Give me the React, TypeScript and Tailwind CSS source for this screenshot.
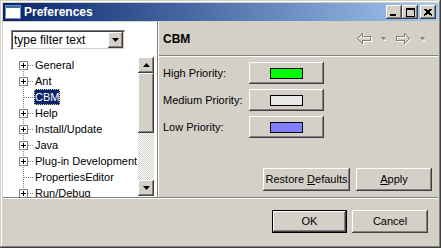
import React from "react";

const raised =
  "bg-[#d4d0c8] shadow-[inset_-1px_-1px_#404040,inset_1px_1px_#ffffff,inset_-2px_-2px_#808080,inset_2px_2px_#d4d0c8]";
const sunken =
  "shadow-[inset_1px_1px_#808080,inset_-1px_-1px_#ffffff,inset_2px_2px_#404040,inset_-2px_-2px_#d4d0c8]";

function TreeGutter({ expander, first }: { expander: boolean; first?: boolean }) {
  return (
    <svg width="23" height="16" className="shrink-0" shapeRendering="crispEdges">
      <line
        x1="12.5"
        y1={first ? 8 : 0}
        x2="12.5"
        y2="16"
        stroke="#808080"
        strokeWidth="1"
        strokeDasharray="1 1"
      />
      <line x1={expander ? 17 : 13} y1="8.5" x2="23" y2="8.5" stroke="#808080" strokeDasharray="1 1" />
      {expander && (
        <g>
          <rect x="8.5" y="4.5" width="8" height="8" fill="#fff" stroke="#808080" />
          <line x1="10" y1="8.5" x2="15" y2="8.5" stroke="#000" />
          <line x1="12.5" y1="6" x2="12.5" y2="11" stroke="#000" />
        </g>
      )}
    </svg>
  );
}

function TreeRow({
  label,
  expander = true,
  first,
  selected,
}: {
  label: string;
  expander?: boolean;
  first?: boolean;
  selected?: boolean;
}) {
  return (
    <div className="flex h-[16px] items-center whitespace-nowrap">
      <TreeGutter expander={expander} first={first} />
      {selected ? (
        <span className="h-[16px] bg-[#0a246a] px-[1px] leading-[16px] text-white outline outline-1 outline-dotted outline-[#d4d0a0] -outline-offset-1">
          {label}
        </span>
      ) : (
        <span className="px-[1px] leading-[16px]">{label}</span>
      )}
    </div>
  );
}

function ColorRow({ label, color }: { label: string; color: string }) {
  return (
    <div className="flex h-[22px] items-center">
      <span className="w-[86px]">{label}</span>
      <div className={`${raised} flex h-[22px] w-[75px] items-center justify-center`}>
        <div className="h-[11px] w-[33px] border border-black" style={{ background: color }} />
      </div>
    </div>
  );
}

function Btn({ children, w, isDefault }: { children: React.ReactNode; w: string; isDefault?: boolean }) {
  const cls = isDefault
    ? "bg-[#d4d0c8] shadow-[inset_0_0_0_1px_#000000,inset_-2px_-2px_#404040,inset_2px_2px_#ffffff,inset_-3px_-3px_#808080]"
    : raised;
  return <div className={`${cls} ${w} flex h-[23px] items-center justify-center`}>{children}</div>;
}

function NavArrow({ dir }: { dir: "left" | "right" }) {
  const pts =
    dir === "left"
      ? "0.5,5.5 5.5,0.5 5.5,3.5 13.5,3.5 13.5,7.5 5.5,7.5 5.5,10.5"
      : "13.5,5.5 8.5,0.5 8.5,3.5 0.5,3.5 0.5,7.5 8.5,7.5 8.5,10.5";
  return (
    <svg width="15" height="12" shapeRendering="crispEdges">
      <polygon points={pts} fill="none" stroke="#ffffff" transform="translate(1,1)" />
      <polygon points={pts} fill="none" stroke="#808080" />
    </svg>
  );
}

function SmallTri() {
  return (
    <svg width="6" height="4">
      <polygon points="0,0 5,0 2.5,3" fill="#808080" />
      <rect x="3" y="3" width="2" height="1" fill="#fff" />
    </svg>
  );
}

export default function App() {
  return (
    <div
      className="flex h-[248px] w-[441px] flex-col bg-[#d4d0c8] p-[3px] text-[11px] text-black shadow-[inset_-1px_-1px_#404040,inset_1px_1px_#d4d0c8,inset_-2px_-2px_#808080,inset_2px_2px_#ffffff]"
      style={{ fontFamily: '"Liberation Sans", Arial, sans-serif' }}
    >
      {/* Title bar */}
      <div className="flex h-[18px] shrink-0 items-center bg-gradient-to-r from-[#0a246a] to-[#a6caf0] pl-[2px] pr-[2px]">
        <svg width="16" height="14" className="shrink-0" shapeRendering="crispEdges">
          <rect x="0" y="0" width="16" height="14" fill="#ffffff" />
          <rect x="0" y="0" width="16" height="3" fill="#3a6ea5" />
          <rect x="0.5" y="0.5" width="15" height="13" fill="none" stroke="#6f8fc0" />
        </svg>
        <span className="ml-[3px] text-[12px] font-bold text-white">Preferences</span>
        <div className="ml-auto flex items-center">
          <div className={`${raised} flex h-[14px] w-[16px] items-end justify-center`}>
            <div className="mb-[3px] ml-[-2px] h-[2px] w-[6px] bg-black" />
          </div>
          <div className={`${raised} flex h-[14px] w-[16px] items-center justify-center`}>
            <div className="h-[9px] w-[9px] border border-t-2 border-black" />
          </div>
          <div className={`${raised} ml-[2px] flex h-[14px] w-[16px] items-center justify-center`}>
            <svg width="8" height="7" shapeRendering="crispEdges">
              <path d="M0 0 L8 7 M1 0 L8 6 M8 0 L0 7 M7 0 L0 6" stroke="#000" strokeWidth="1.2" />
            </svg>
          </div>
        </div>
      </div>
      <div className="h-[1px] shrink-0" />

      {/* Main */}
      <div className="flex h-[175px] shrink-0">
        {/* Left panel */}
        <div className="flex w-[154px] shrink-0 flex-col bg-white pl-[8px] pr-[3px] pt-[8px]">
          <div className={`${sunken} flex h-[20px] w-[114px] items-center bg-white p-[2px]`}>
            <span className="flex-1 pl-[1px] text-[12px] leading-[16px]">type filter text</span>
            <div className={`${raised} flex h-[16px] w-[15px] items-center justify-center`}>
              <svg width="7" height="4">
                <polygon points="0,0 7,0 3.5,4" fill="#000" />
              </svg>
            </div>
          </div>
          <div className="mt-[7px] flex min-h-0 flex-1">
            <div className="min-w-0 flex-1 overflow-hidden">
              <TreeRow label="General" first />
              <TreeRow label="Ant" />
              <TreeRow label="CBM" expander={false} selected />
              <TreeRow label="Help" />
              <TreeRow label="Install/Update" />
              <TreeRow label="Java" />
              <TreeRow label="Plug-in Development" />
              <TreeRow label="PropertiesEditor" expander={false} />
              <TreeRow label="Run/Debug" />
            </div>
            {/* Scrollbar */}
            <div className="flex h-[139px] w-[16px] shrink-0 flex-col">
              <div className={`${raised} flex h-[16px] w-[16px] items-center justify-center`}>
                <svg width="7" height="4">
                  <polygon points="3.5,0 7,4 0,4" fill="#000" />
                </svg>
              </div>
              <div className={`${raised} h-[60px] w-[16px]`} />
              <div className="flex-1 bg-[repeating-conic-gradient(#d4d0c8_0%_25%,#ffffff_0%_50%)] bg-[length:2px_2px]" />
              <div className={`${raised} flex h-[16px] w-[16px] items-center justify-center`}>
                <svg width="7" height="4">
                  <polygon points="0,0 7,0 3.5,4" fill="#000" />
                </svg>
              </div>
            </div>
          </div>
        </div>
        {/* sash */}
        <div className="w-[1px] shrink-0 bg-[#808080]" />
        <div className="w-[1px] shrink-0 bg-white" />

        {/* Right panel */}
        <div className="flex flex-1 flex-col">
          <div className="flex h-[33px] shrink-0 items-center pl-[4px] pr-[12px]">
            <span className="text-[12px] font-bold">CBM</span>
            <div className="ml-auto flex items-center gap-[9px]">
              <NavArrow dir="left" />
              <SmallTri />
              <NavArrow dir="right" />
              <SmallTri />
            </div>
          </div>
          <div className="h-[1px] shrink-0 bg-[#808080]" />
          <div className="h-[1px] shrink-0 bg-white" />
          <div className="flex flex-1 flex-col gap-[5px] pl-[4px] pt-[5px]">
            <ColorRow label="High Priority:" color="#00ff00" />
            <ColorRow label="Medium Priority:" color="#e8e8e8" />
            <ColorRow label="Low Priority:" color="#8080ff" />
          </div>
          <div className="flex shrink-0 justify-end gap-[6px] pb-[6px] pr-[6px]">
            <Btn w="w-[87px]">
              <span>
                Restore <span className="underline">D</span>efaults
              </span>
            </Btn>
            <Btn w="w-[76px]">
              <span>
                <span className="underline">A</span>pply
              </span>
            </Btn>
          </div>
        </div>
      </div>

      <div className="h-[1px] shrink-0 bg-[#808080]" />
      <div className="h-[1px] shrink-0 bg-white" />

      {/* Footer */}
      <div className="flex flex-1 items-start justify-end gap-[5px] pr-[10px] pt-[11px]">
        <Btn w="w-[75px]" isDefault>
          OK
        </Btn>
        <Btn w="w-[76px]">Cancel</Btn>
      </div>
    </div>
  );
}
